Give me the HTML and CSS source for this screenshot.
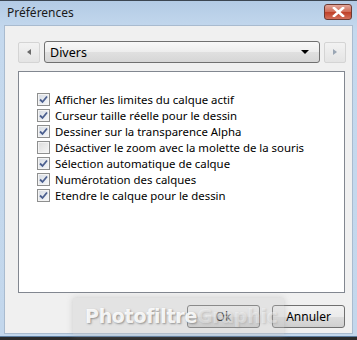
FILE: index.html
```html
<!DOCTYPE html>
<html lang="fr">
  <head>
    <meta charset="UTF-8" />
    <title>Préférences</title>
    <link rel="stylesheet" href="styles.css">
  </head>
  <body>
    <div class="window">
      <div class="titlebar">
        <span class="title">Préférences</span>
        <button class="close">
          <svg width="13" height="10" viewBox="0 0 13 10">
            <path d="M2 1 L11 9 M11 1 L2 9" stroke="#fff" stroke-width="2.6" stroke-linecap="square" />
          </svg>
        </button>
      </div>

      <div class="client">
        <div class="pager">
          <button class="arrow">
            <svg width="4" height="6" viewBox="0 0 4 6"><path d="M4 0 L0 3 L4 6 Z" fill="#6a6a6a" /></svg>
          </button>
          <div class="combo">
            <span>Divers</span>
            <svg width="8" height="4" viewBox="0 0 8 4"><path d="M0 0 L8 0 L4 4 Z" fill="#000" /></svg>
          </div>
          <button class="arrow">
            <svg width="4" height="6" viewBox="0 0 4 6"><path d="M0 0 L4 3 L0 6 Z" fill="#9aa6b4" /></svg>
          </button>
        </div>

        <div class="panel">
          <div class="opt"><span class="box checked"><svg width="9" height="9" viewBox="0 0 9 9"><path d="M1 4.5 L3.5 7 L8 1.5" fill="none" stroke="#4b5f8f" stroke-width="1.8" /></svg></span>Afficher les limites du calque actif</div>
          <div class="opt"><span class="box checked"><svg width="9" height="9" viewBox="0 0 9 9"><path d="M1 4.5 L3.5 7 L8 1.5" fill="none" stroke="#4b5f8f" stroke-width="1.8" /></svg></span>Curseur taille réelle pour le dessin</div>
          <div class="opt"><span class="box checked"><svg width="9" height="9" viewBox="0 0 9 9"><path d="M1 4.5 L3.5 7 L8 1.5" fill="none" stroke="#4b5f8f" stroke-width="1.8" /></svg></span>Dessiner sur la transparence Alpha</div>
          <div class="opt"><span class="box"></span>Désactiver le zoom avec la molette de la souris</div>
          <div class="opt"><span class="box checked"><svg width="9" height="9" viewBox="0 0 9 9"><path d="M1 4.5 L3.5 7 L8 1.5" fill="none" stroke="#4b5f8f" stroke-width="1.8" /></svg></span>Sélection automatique de calque</div>
          <div class="opt"><span class="box checked"><svg width="9" height="9" viewBox="0 0 9 9"><path d="M1 4.5 L3.5 7 L8 1.5" fill="none" stroke="#4b5f8f" stroke-width="1.8" /></svg></span>Numérotation des calques</div>
          <div class="opt"><span class="box checked"><svg width="9" height="9" viewBox="0 0 9 9"><path d="M1 4.5 L3.5 7 L8 1.5" fill="none" stroke="#4b5f8f" stroke-width="1.8" /></svg></span>Etendre le calque pour le dessin</div>
        </div>

        <div class="actions">
          <button class="btn">Ok</button>
          <button class="btn">Annuler</button>
        </div>

        <div class="watermark">Photofiltre<span>Graphic</span></div>
      </div>
    </div>
  </body>
</html>
```

FILE: styles.css
```css
html, body {
  margin: 0;
  padding: 0;
  background: #2b2b2b;
}
body {
  width: 357px;
  height: 340px;
  overflow: hidden;
  font-family: "Noto Sans", sans-serif;
  font-size: 12px;
  color: #000;
}
.window {
  height: 337px;
  border-top: 1px solid #3c4652;
  background: linear-gradient(#b3cbe5, #c5d9ee 30px, #c3d7ec);
  padding: 0 4px 3px 4px;
  box-sizing: border-box;
  border-bottom: 1px solid #5d7d9f;
}
.titlebar {
  height: 24px;
  display: flex;
  align-items: center;
  justify-content: space-between;
  padding: 0 0 0 3px;
}
.title {
  font-size: 12px;
  color: #1a1a1a;
  margin-top: -1px;
}
.close {
  width: 28px;
  height: 16px;
  margin-right: 1px;
  margin-top: -3px;
  border: 1px solid #6d3a32;
  border-radius: 3px;
  background: linear-gradient(#e3a79b, #cf6a55 50%, #bf3f27 51%, #d3705b);
  display: flex;
  align-items: center;
  justify-content: center;
  padding: 0;
}
.client {
  position: relative;
  background: #f0f0f0;
  height: 309px;
  border: 1px solid #a9bbcf;
  box-sizing: border-box;
  padding: 15px 6px 0 13px;
}
.pager {
  display: flex;
  align-items: center;
  gap: 4px;
  height: 22px;
}
.arrow {
  width: 22px;
  height: 21px;
  border: 1px solid #d4d4d4;
  border-radius: 2px;
  background: linear-gradient(#f2f2f2, #e4e4e4);
  display: flex;
  align-items: center;
  justify-content: center;
  padding: 0;
}
.combo {
  flex: 1;
  height: 22px;
  box-sizing: border-box;
  border: 1px solid #707070;
  border-radius: 3px;
  background: linear-gradient(#f8f8f8, #ededed 50%, #e0e0e0 51%, #d6d6d6);
  display: flex;
  align-items: center;
  justify-content: space-between;
  padding: 0 10px 0 5px;
  font-size: 12.5px;
}
.panel {
  margin-top: 8px;
  margin-right: 1px;
  height: 222px;
  box-sizing: border-box;
  background: #fff;
  border: 1px solid #828790;
  padding: 19px 0 0 18px;
  display: flex;
  flex-direction: column;
  font-size: 11.4px;
}
.opt {
  display: flex;
  align-items: center;
  height: 16px;
  gap: 5px;
  white-space: nowrap;
}
.box {
  width: 13px;
  height: 13px;
  box-sizing: border-box;
  border: 1px solid #8e8f8f;
  background: linear-gradient(135deg, #dcdcdc, #f6f6f6);
  box-shadow: inset 0 0 0 1px #f4f4f4;
  display: flex;
  align-items: center;
  justify-content: center;
  flex: none;
}
.box.checked {
  background: linear-gradient(135deg, #d6dbe3, #f7f8fa);
}
.actions {
  display: flex;
  justify-content: flex-end;
  gap: 12px;
  margin-top: 12px;
  margin-right: 1px;
}
.btn {
  width: 73px;
  height: 23px;
  border: 1px solid #707070;
  border-radius: 3px;
  background: linear-gradient(#f2f2f2, #ebebeb 50%, #dddddd 51%, #cfcfcf);
  font-family: "Noto Sans", sans-serif;
  font-size: 12px;
  padding: 0;
}
.watermark {
  position: absolute;
  left: 68px;
  top: 272px;
  width: 211px;
  height: 37px;
  background: rgba(200, 200, 200, 0.3);
  box-shadow: 0 0 6px rgba(160, 160, 160, 0.45);
  color: rgba(255, 255, 255, 0.9);
  font-family: "DejaVu Sans", sans-serif;
  font-weight: bold;
  font-size: 19px;
  line-height: 36px;
  padding-left: 12px;
  box-sizing: border-box;
  text-shadow: 1px 1px 2px rgba(110, 110, 110, 0.7);
  letter-spacing: -0.3px;
  pointer-events: none;
}
.watermark span {
  color: rgba(255, 255, 255, 0.4);
  text-shadow: 1px 1px 2px rgba(140, 140, 140, 0.35);
}
```
